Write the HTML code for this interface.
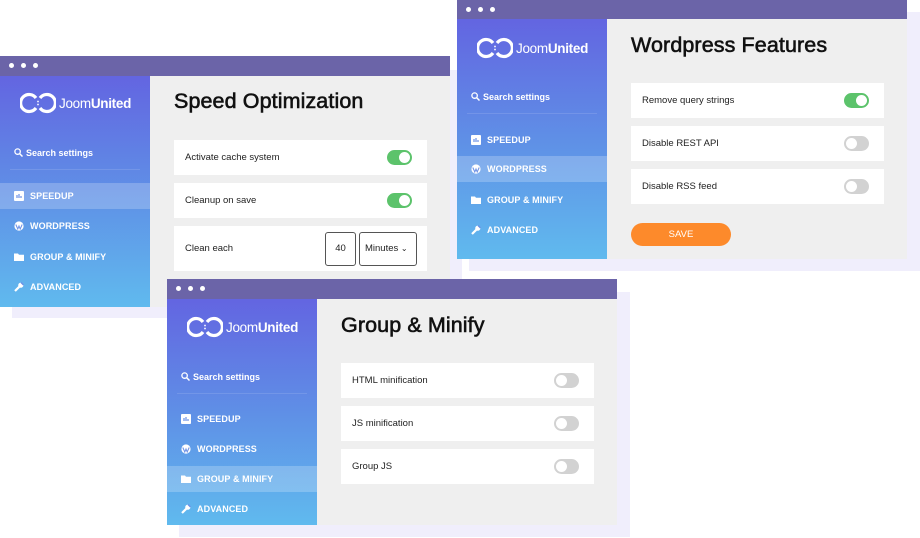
<!DOCTYPE html>
<html><head><meta charset="utf-8"><style>
*{margin:0;padding:0;box-sizing:border-box}
body{width:920px;height:538px;background:#fff;position:relative;overflow:hidden;font-family:"Liberation Sans",Arial,sans-serif}
.sh{position:absolute;background:#f0eefc}
.win{position:absolute;width:450px}
.tb{height:20px;background:#6b64a8;position:relative}
.tb i{position:absolute;top:7px;width:5px;height:5px;border-radius:50%;background:#fff}
.body{position:relative;background:#efefef}
.sb{position:absolute;left:0;top:0;width:150px;height:100%;background:linear-gradient(#6365e1,#5f8fe6 50%,#60baee)}
.logo{position:absolute;left:20px;width:120px;height:24px;color:#fff;font-size:13.5px}
.logo svg{position:absolute;left:0;top:0}
.logo span{position:absolute;left:39px;top:4px;letter-spacing:-0.3px}
.search{position:absolute;left:14px;color:#fff;font-size:9px;font-weight:bold}
.search svg{vertical-align:-1px;margin-right:3px}
.div{position:absolute;left:10px;width:130px;height:1px;background:rgba(255,255,255,.12)}
.nav{position:absolute;left:0;width:150px;height:26px;line-height:26px;color:#fff;font-size:9px;font-weight:bold;padding-left:30px;letter-spacing:.1px}
.nav.act{background:rgba(255,255,255,.22)}
.nav .ic{position:absolute;left:14px;top:8px;width:10px;height:10px}
.main{position:absolute;left:150px;top:0;right:0;height:100%}
.h{position:absolute;left:24px;font-size:21.5px;color:#111;font-weight:normal;letter-spacing:.1px;-webkit-text-stroke:0.6px #111}
.card{position:absolute;left:24px;width:253px;height:35px;background:#fff;font-size:9.5px;color:#222;padding-left:11px;line-height:35px}
.tg{position:absolute;right:15px;top:10px;width:25px;height:15px;border-radius:8px;background:#d2d2d2}
.tg::after{content:"";position:absolute;left:2px;top:2px;width:11px;height:11px;border-radius:50%;background:#fff}
.tg.on{background:#5cc36b}
.tg.on::after{left:12px}
</style></head><body>

<div class="sh" style="left:12px;top:70px;width:450px;height:248px"></div>
<div class="sh" style="left:469px;top:12px;width:451px;height:259px"></div>
<div class="sh" style="left:179px;top:292px;width:451px;height:245px"></div>

<svg width="0" height="0" style="position:absolute">
<defs>
<symbol id="lg" viewBox="0 0 36 22"><g fill="none" stroke="#fff" stroke-width="3.2"><path d="M16 6 A8.5 8.5 0 1 0 16 16"/><path d="M20 6 A8.5 8.5 0 1 1 20 16"/></g><path d="M17.2 9.5h1.6M17.2 12.5h1.6" stroke="#fff" stroke-width="1.6"/></symbol>
<symbol id="ic1" viewBox="0 0 10 10"><rect width="10" height="10" rx="1" fill="#fff"/><path d="M3 7V4M5 7V3M7 7V5" stroke="#6a8fe6" stroke-width="1.2"/></symbol>
<symbol id="ic2" viewBox="0 0 10 10"><circle cx="5" cy="5" r="4.6" fill="#fff"/><path d="M1.8 3.5l2 4.5 1.2-3 1.2 3 2-4.5" stroke="#6a8fe6" stroke-width="1" fill="none"/></symbol>
<symbol id="ic3" viewBox="0 0 10 10"><path d="M0 1.5h4l1 1.2h5V9H0z" fill="#fff"/></symbol>
<symbol id="ic4" viewBox="0 0 10 10"><path d="M1 9L5.2 4.8" stroke="#fff" stroke-width="2.2"/><circle cx="6.8" cy="3.2" r="2.6" fill="#fff"/><path d="M7 0.5l2.5 2.5" stroke="#6a8fe6" stroke-width="1.3"/></symbol>
<symbol id="sr" viewBox="0 0 9 9"><circle cx="3.6" cy="3.6" r="2.7" fill="none" stroke="#fff" stroke-width="1.3"/><path d="M5.6 5.6L8.5 8.5" stroke="#fff" stroke-width="1.5"/></symbol>
</defs></svg>

<div class="win" style="left:0;top:56px">
 <div class="tb"><i style="left:9px"></i><i style="left:21px"></i><i style="left:33px"></i></div>
 <div class="body" style="height:231px">
  <div class="sb">
   <div class="logo" style="top:16px"><svg width="36" height="22"><use href="#lg"/></svg><span>Joom<b>United</b></span></div>
   <div class="search" style="top:72px"><svg width="9" height="9"><use href="#sr"/></svg>Search settings</div>
   <div class="div" style="top:93px"></div>
   <div class="nav act" style="top:107px"><svg class="ic"><use href="#ic1"/></svg>SPEEDUP</div>
   <div class="nav" style="top:137px"><svg class="ic"><use href="#ic2"/></svg>WORDPRESS</div>
   <div class="nav" style="top:168px"><svg class="ic"><use href="#ic3"/></svg>GROUP &amp; MINIFY</div>
   <div class="nav" style="top:198px"><svg class="ic"><use href="#ic4"/></svg>ADVANCED</div>
  </div>
  <div class="main">
   <div class="h" style="top:13px">Speed Optimization</div>
   <div class="card" style="top:64px">Activate cache system<div class="tg on"></div></div>
   <div class="card" style="top:107px">Cleanup on save<div class="tg on"></div></div>
   <div class="card" style="top:150px;height:45px;line-height:45px">Clean each
    <div style="position:absolute;left:151px;top:6px;width:31px;height:34px;border:1px solid #555;border-radius:3px;text-align:center;line-height:32px">40</div>
    <div style="position:absolute;left:185px;top:6px;width:58px;height:34px;border:1px solid #555;border-radius:3px;line-height:32px;padding-left:5px">Minutes <span style="font-size:8px">&#8964;</span></div>
   </div>
  </div>
 </div>
</div>

<div class="win" style="left:457px;top:0">
 <div class="tb" style="height:19px"><i style="left:9px"></i><i style="left:21px"></i><i style="left:33px"></i></div>
 <div class="body" style="height:240px">
  <div class="sb">
   <div class="logo" style="top:18px"><svg width="36" height="22"><use href="#lg"/></svg><span>Joom<b>United</b></span></div>
   <div class="search" style="top:73px"><svg width="9" height="9"><use href="#sr"/></svg>Search settings</div>
   <div class="div" style="top:94px"></div>
   <div class="nav" style="top:108px"><svg class="ic"><use href="#ic1"/></svg>SPEEDUP</div>
   <div class="nav act" style="top:137px"><svg class="ic"><use href="#ic2"/></svg>WORDPRESS</div>
   <div class="nav" style="top:168px"><svg class="ic"><use href="#ic3"/></svg>GROUP &amp; MINIFY</div>
   <div class="nav" style="top:198px"><svg class="ic"><use href="#ic4"/></svg>ADVANCED</div>
  </div>
  <div class="main">
   <div class="h" style="top:14px">Wordpress Features</div>
   <div class="card" style="top:64px">Remove query strings<div class="tg on"></div></div>
   <div class="card" style="top:107px">Disable REST API<div class="tg"></div></div>
   <div class="card" style="top:150px">Disable RSS feed<div class="tg"></div></div>
   <div style="position:absolute;left:24px;top:204px;width:100px;height:23px;border-radius:12px;background:#fd8a2b;color:#fff;font-size:9.5px;text-align:center;line-height:23px">SAVE</div>
  </div>
 </div>
</div>

<div class="win" style="left:167px;top:279px">
 <div class="tb"><i style="left:9px"></i><i style="left:21px"></i><i style="left:33px"></i></div>
 <div class="body" style="height:226px">
  <div class="sb">
   <div class="logo" style="top:17px"><svg width="36" height="22"><use href="#lg"/></svg><span>Joom<b>United</b></span></div>
   <div class="search" style="top:73px"><svg width="9" height="9"><use href="#sr"/></svg>Search settings</div>
   <div class="div" style="top:94px"></div>
   <div class="nav" style="top:107px"><svg class="ic"><use href="#ic1"/></svg>SPEEDUP</div>
   <div class="nav" style="top:137px"><svg class="ic"><use href="#ic2"/></svg>WORDPRESS</div>
   <div class="nav act" style="top:167px"><svg class="ic"><use href="#ic3"/></svg>GROUP &amp; MINIFY</div>
   <div class="nav" style="top:197px"><svg class="ic"><use href="#ic4"/></svg>ADVANCED</div>
  </div>
  <div class="main">
   <div class="h" style="top:14px">Group &amp; Minify</div>
   <div class="card" style="top:64px">HTML minification<div class="tg"></div></div>
   <div class="card" style="top:107px">JS minification<div class="tg"></div></div>
   <div class="card" style="top:150px">Group JS<div class="tg"></div></div>
  </div>
 </div>
</div>
</body></html>
